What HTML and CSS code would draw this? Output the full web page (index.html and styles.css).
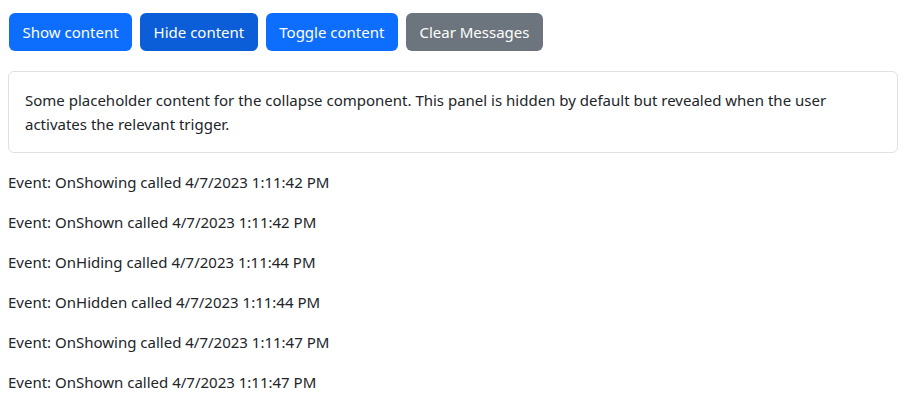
FILE: index.html
```html
<!DOCTYPE html>
<html>
<head>
<meta charset="utf-8">
<link rel="stylesheet" href="styles.css">
</head>
<body>
<div class="toolbar">
  <button class="btn btn-primary">Show content</button>
  <button class="btn btn-primary active">Hide content</button>
  <button class="btn btn-primary">Toggle content</button>
  <button class="btn btn-secondary">Clear Messages</button>
</div>
<div class="panel">Some placeholder content for the collapse component. This panel is hidden by default but revealed when the user activates the relevant trigger.</div>
<div class="log">
  <p>Event: OnShowing called 4/7/2023 1:11:42 PM</p>
  <p>Event: OnShown called 4/7/2023 1:11:42 PM</p>
  <p>Event: OnHiding called 4/7/2023 1:11:44 PM</p>
  <p>Event: OnHidden called 4/7/2023 1:11:44 PM</p>
  <p>Event: OnShowing called 4/7/2023 1:11:47 PM</p>
  <p>Event: OnShown called 4/7/2023 1:11:47 PM</p>
</div>
</body>
</html>
```
FILE: styles.css
```css
html, body { margin: 0; padding: 0; background: #fff; }
body {
  padding: 0 8px;
  font-family: "Noto Sans", "Open Sans", sans-serif;
  font-size: 15px;
  line-height: 24px;
  color: #212529;
}
.toolbar {
  display: flex;
  gap: 8px;
  padding-top: 13px;
  padding-left: 1px;
}
.btn {
  font-family: inherit;
  font-size: 15px;
  line-height: 24px;
  padding: 7px 13.5px;
  border: 0;
  border-radius: 6px;
  color: #fff;
  cursor: pointer;
}
.btn-primary { background: #0d6efd; }
.btn-primary.active { background: #0b5ed7; }
.btn-secondary { background: #6c757d; }
.panel {
  margin-top: 20px;
  border: 1px solid #dee2e6;
  border-radius: 6px;
  padding: 16px;
}
.log { padding-top: 17px; }
.log p { margin: 0 0 16px; }
```
